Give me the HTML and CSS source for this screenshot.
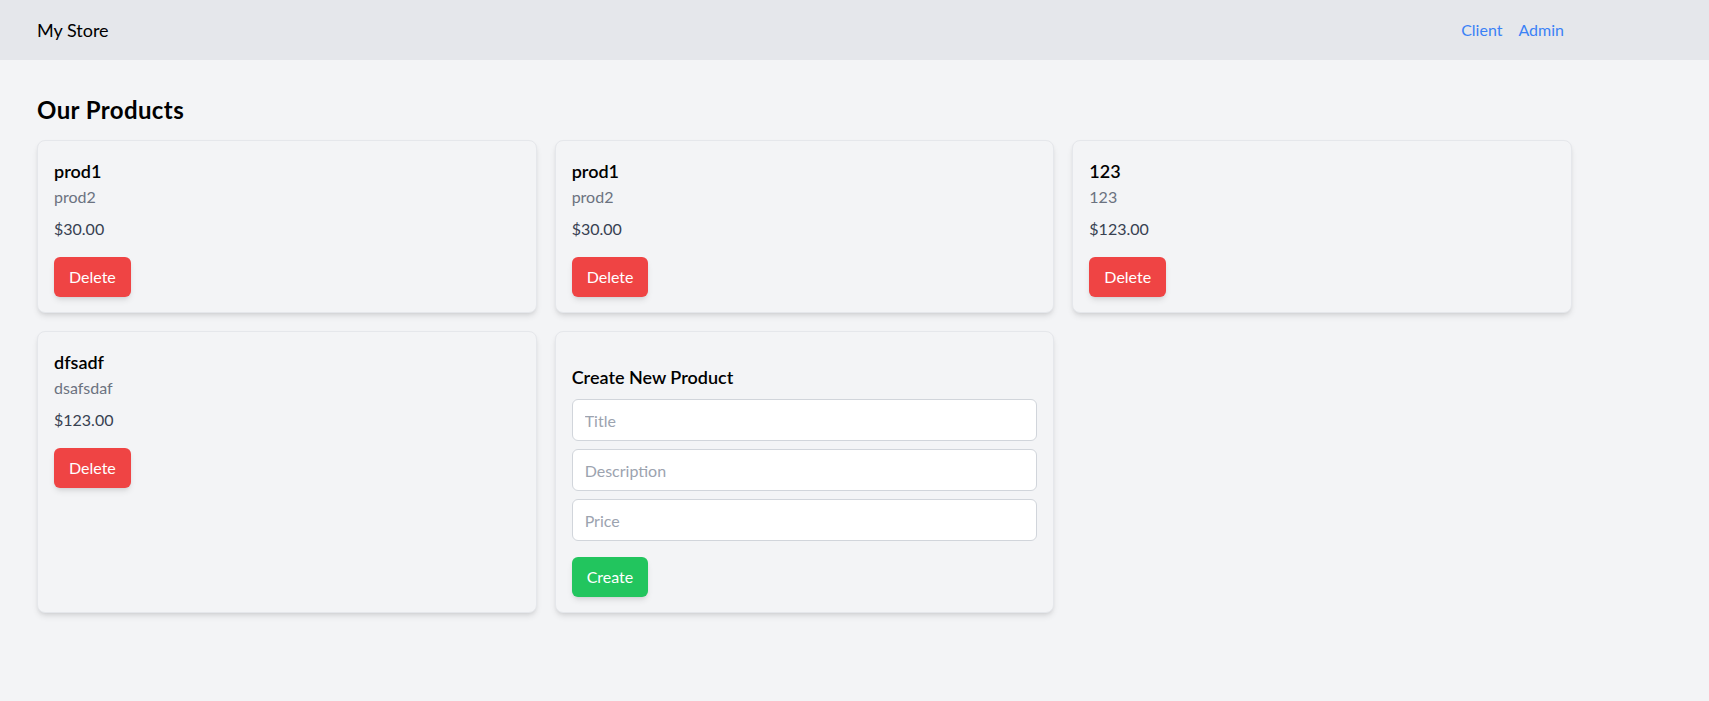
FILE: index.html
```html
<!DOCTYPE html>
<html lang="en">
<head>
<meta charset="utf-8">
<title>My Store</title>
<link rel="stylesheet" href="styles.css">
</head>
<body>
<header class="topbar">
  <div class="topbar-inner">
    <div class="brand">My Store</div>
    <nav class="nav">
      <a href="#" class="nav-link">Client</a>
      <a href="#" class="nav-link">Admin</a>
    </nav>
  </div>
</header>
<main class="main">
  <h1 class="page-title">Our Products</h1>
  <div class="grid">
    <div class="card">
      <h2 class="prod-title">prod1</h2>
      <p class="prod-desc">prod2</p>
      <p class="prod-price">$30.00</p>
      <button class="btn btn-red">Delete</button>
    </div>
    <div class="card">
      <h2 class="prod-title">prod1</h2>
      <p class="prod-desc">prod2</p>
      <p class="prod-price">$30.00</p>
      <button class="btn btn-red">Delete</button>
    </div>
    <div class="card">
      <h2 class="prod-title">123</h2>
      <p class="prod-desc">123</p>
      <p class="prod-price">$123.00</p>
      <button class="btn btn-red">Delete</button>
    </div>
    <div class="card">
      <h2 class="prod-title">dfsadf</h2>
      <p class="prod-desc">dsafsdaf</p>
      <p class="prod-price">$123.00</p>
      <button class="btn btn-red">Delete</button>
    </div>
    <div class="card">
      <h2 class="form-title">Create New Product</h2>
      <input class="field" type="text" placeholder="Title">
      <input class="field" type="text" placeholder="Description">
      <input class="field" type="text" placeholder="Price">
      <button class="btn btn-green">Create</button>
    </div>
  </div>
</main>
</body>
</html>
```

FILE: styles.css
```css
* { box-sizing: border-box; }
html, body { margin: 0; padding: 0; }
body {
  background: #f3f4f6;
  font-family: Lato, "Noto Sans", sans-serif;
  color: #111827;
  font-size: 16px;
  line-height: 24px;
}
.topbar {
  background: #e5e7eb;
  padding: 16px 37px;
}
.topbar-inner {
  width: 1527px;
  display: flex;
  justify-content: space-between;
  align-items: center;
}
.brand {
  font-size: 18px;
  line-height: 28px;
  color: #000;
}
.nav { display: flex; gap: 16px; }
.nav-link {
  color: #3b82f6;
  text-decoration: none;
  font-size: 16px;
  line-height: 24px;
}
.main { padding: 34px 37px 32px; }
.page-title {
  margin: 0 0 14px;
  font-size: 24px;
  line-height: 32px;
  font-weight: 700;
  letter-spacing: 0.4px;
  color: #000;
}
.grid {
  width: 1535px;
  display: grid;
  grid-template-columns: repeat(3, 1fr);
  gap: 18px;
}
.card {
  background: #f3f4f6;
  border: 1px solid #e5e7eb;
  border-radius: 8px;
  padding: 16px 16px 15px;
  box-shadow: 0 4px 6px -1px rgba(0,0,0,0.1), 0 2px 4px -2px rgba(0,0,0,0.1);
  display: flex;
  flex-direction: column;
  align-items: flex-start;
}
.prod-title {
  margin: 0;
  font-size: 18px;
  line-height: 28px;
  font-weight: 600;
  color: #000;
}
.prod-desc {
  margin: 0;
  color: #6b7280;
}
.prod-price {
  margin: 8px 0 0;
  color: #374151;
}
.btn {
  margin-top: 16px;
  border: none;
  border-radius: 6px;
  padding: 8px 15px;
  font-family: inherit;
  font-size: 16px;
  line-height: 24px;
  color: #fff;
  box-shadow: 0 4px 6px -1px rgba(0,0,0,0.1), 0 2px 4px -2px rgba(0,0,0,0.1);
  cursor: pointer;
}
.btn-red { background: #ef4444; }
.btn-green { background: #22c55e; margin-top: 8px; }
.form-title {
  margin: 15px 0 8px;
  font-size: 18px;
  line-height: 28px;
  font-weight: 600;
  color: #000;
}
.field {
  width: 100%;
  height: 42px;
  margin-bottom: 8px;
  padding: 8px 12px;
  border: 1px solid #d1d5db;
  border-radius: 6px;
  background: #fff;
  font-family: inherit;
  font-size: 16px;
  line-height: 24px;
  color: #111827;
}
.field::placeholder { color: #9ca3af; }
```
